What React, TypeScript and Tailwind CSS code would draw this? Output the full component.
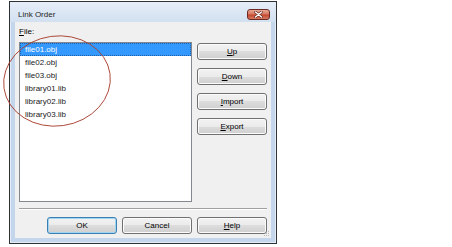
import React from 'react';

const files = ['file01.obj', 'file02.obj', 'file03.obj', 'library01.lib', 'library02.lib', 'library03.lib'];

const btnBase =
    'w-[70px] h-[17px] flex items-center justify-center rounded-[3px] border text-[8px] leading-none text-black bg-[linear-gradient(to_bottom,#f2f2f2_0%,#ebebeb_50%,#dddddd_50%,#cfcfcf_100%)]';

const WinButton: React.FC<{ label: React.ReactNode; primary?: boolean }> = ({ label, primary }) => (
    <button
        className={
            primary
                ? `${btnBase} border-[#3c7fb1] shadow-[inset_0_0_0_1px_#9fd5f3]`
                : `${btnBase} border-[#707070] shadow-[inset_0_0_0_1px_#fcfcfc]`
        }
    >
        {label}
    </button>
);

const App: React.FC = () => {
    return (
        <div
            className="relative w-[452px] h-[247px] bg-white pt-[1px] pl-[9px]"
            style={{ fontFamily: '"Liberation Sans", Arial, sans-serif' }}
        >
            {/* dialog frame */}
            <div className="w-[268px] h-[243px] flex flex-col border border-[#2f3235] bg-[#c3d6eb] shadow-[inset_0_0_0_1px_#e4edf7]">
                {/* title bar */}
                <div className="h-[20px] shrink-0 flex items-center justify-between pt-[5px] pl-[8px] pr-[6px] bg-[linear-gradient(to_bottom,#e6eef8,#d2e0f0)]">
                    <span className="text-[8px] leading-none text-[#1e1e1e]">Link Order</span>
                    <div className="w-[23px] h-[11px] rounded-[3px] border border-[#6b2a22] bg-[linear-gradient(to_bottom,#e9a99a_0%,#d7775f_45%,#c4472f_55%,#d57a60_100%)] flex items-center justify-center">
                        <svg width="9" height="7" viewBox="0 0 9 7">
                            <path d="M1.5 1 L7.5 6 M7.5 1 L1.5 6" stroke="#5a1e16" strokeWidth="2.6" strokeLinecap="round" />
                            <path d="M1.5 1 L7.5 6 M7.5 1 L1.5 6" stroke="#ffffff" strokeWidth="1.5" strokeLinecap="round" />
                        </svg>
                    </div>
                </div>

                {/* client area */}
                <div className="relative flex-1 mx-[5px] mb-[5px] bg-[#f0f0f0] flex flex-col px-[4px] pt-[4px]">
                    <div className="h-[12px] flex items-center text-[8px] leading-none text-black">
                        <span className="underline">F</span>ile:
                    </div>

                    <div className="mt-[4px] flex gap-[5px]">
                        <div className="w-[173px] h-[160px] border border-[#828790] bg-white">
                            {files.map((f, i) => (
                                <div
                                    key={f}
                                    className={
                                        i === 0
                                            ? 'h-[13px] flex items-center pl-[5px] text-[8px] leading-none bg-[#3399ff] text-white outline outline-1 outline-dotted outline-offset-[-1px] outline-[#1f5fa8]'
                                            : 'h-[13px] flex items-center pl-[5px] text-[8px] leading-none text-[#222]'
                                    }
                                >
                                    {f}
                                </div>
                            ))}
                        </div>

                        <div className="flex flex-col gap-[8px] pt-[1px]">
                            <WinButton label={<><span className="underline">U</span>p</>} />
                            <WinButton label={<><span className="underline">D</span>own</>} />
                            <WinButton label={<><span className="underline">I</span>mport</>} />
                            <WinButton label={<><span className="underline">E</span>xport</>} />
                        </div>
                    </div>

                    <div className="mt-[6px] h-[2px] border-t border-[#a0a0a0] border-b border-b-white" />

                    <div className="mt-[7px] flex justify-end gap-[5px]">
                        <WinButton label="OK" primary />
                        <WinButton label="Cancel" />
                        <WinButton label={<><span className="underline">H</span>elp</>} />
                    </div>

                    {/* resize grip */}
                    <svg className="absolute right-[1px] bottom-[1px]" width="6" height="6" viewBox="0 0 6 6">
                        <rect x="4" y="0" width="1" height="1" fill="#b8b8b8" />
                        <rect x="2" y="2" width="1" height="1" fill="#b8b8b8" />
                        <rect x="4" y="2" width="1" height="1" fill="#b8b8b8" />
                        <rect x="0" y="4" width="1" height="1" fill="#b8b8b8" />
                        <rect x="2" y="4" width="1" height="1" fill="#b8b8b8" />
                        <rect x="4" y="4" width="1" height="1" fill="#b8b8b8" />
                    </svg>
                </div>
            </div>

            {/* hand-drawn annotation circle */}
            <svg className="absolute inset-0 pointer-events-none" width="452" height="247">
                <ellipse cx="57" cy="81" rx="53.5" ry="45" transform="rotate(-8 57 81)" fill="none" stroke="#a8402f" strokeWidth="0.9" />
            </svg>
        </div>
    );
};

export default App;
